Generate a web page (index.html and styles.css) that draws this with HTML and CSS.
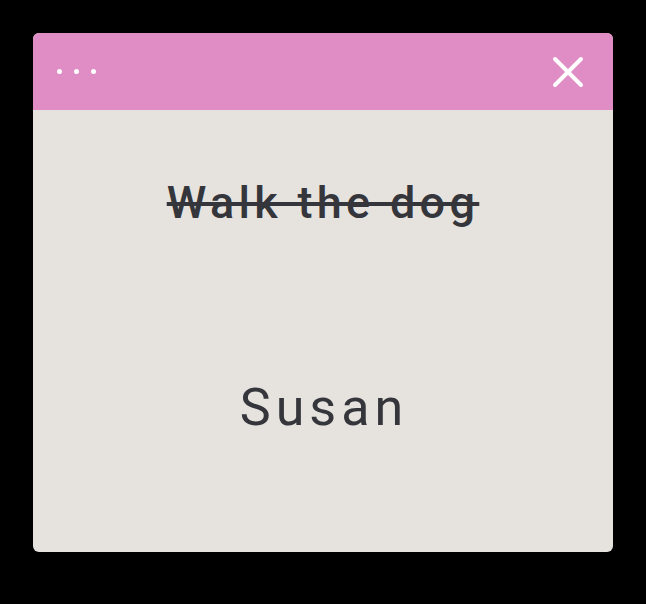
FILE: index.html
```html
<!DOCTYPE html>
<html>
<head>
<meta charset="utf-8">
<link rel="stylesheet" href="styles.css">
</head>
<body>
<div class="card">
  <div class="header">
    <div class="dots"><span></span><span></span><span></span></div>
    <svg class="close" width="32" height="32" viewBox="0 0 32 32"><path d="M3 3L29 29M29 3L3 29" stroke="#fff" stroke-width="4" stroke-linecap="round"/></svg>
  </div>
  <div class="body">
    <div class="title">Walk the dog</div>
    <div class="name">Susan</div>
  </div>
</div>
</body>
</html>
```
FILE: styles.css
```css
html, body { margin: 0; padding: 0; background: #000; }
body { width: 646px; height: 604px; padding: 33px; box-sizing: border-box; }
.card {
  width: 580px; height: 519px; border-radius: 6px; overflow: hidden;
  background: #e6e3df; display: flex; flex-direction: column;
}
.header {
  height: 77px; background: #e08cc5; display: flex; align-items: center;
  justify-content: space-between; padding: 0 29px 0 24px; box-sizing: border-box;
}
.dots { display: flex; gap: 12px; }
.dots span { width: 5px; height: 5px; border-radius: 50%; background: #fff; }
.close { display: block; }
.body {
  flex: 1; display: flex; flex-direction: column; align-items: center;
  font-family: Roboto, "Liberation Sans", sans-serif; color: #35363b;
}
.title {
  margin-top: 66px; font-size: 45px; font-weight: 500; letter-spacing: 4.3px;
  text-decoration: line-through; text-decoration-thickness: 4px; line-height: 54px;
}
.name {
  margin-top: 148px; font-size: 52px; font-weight: 400; letter-spacing: 5px;
  line-height: 60px; padding-left: 2px;
}
```
